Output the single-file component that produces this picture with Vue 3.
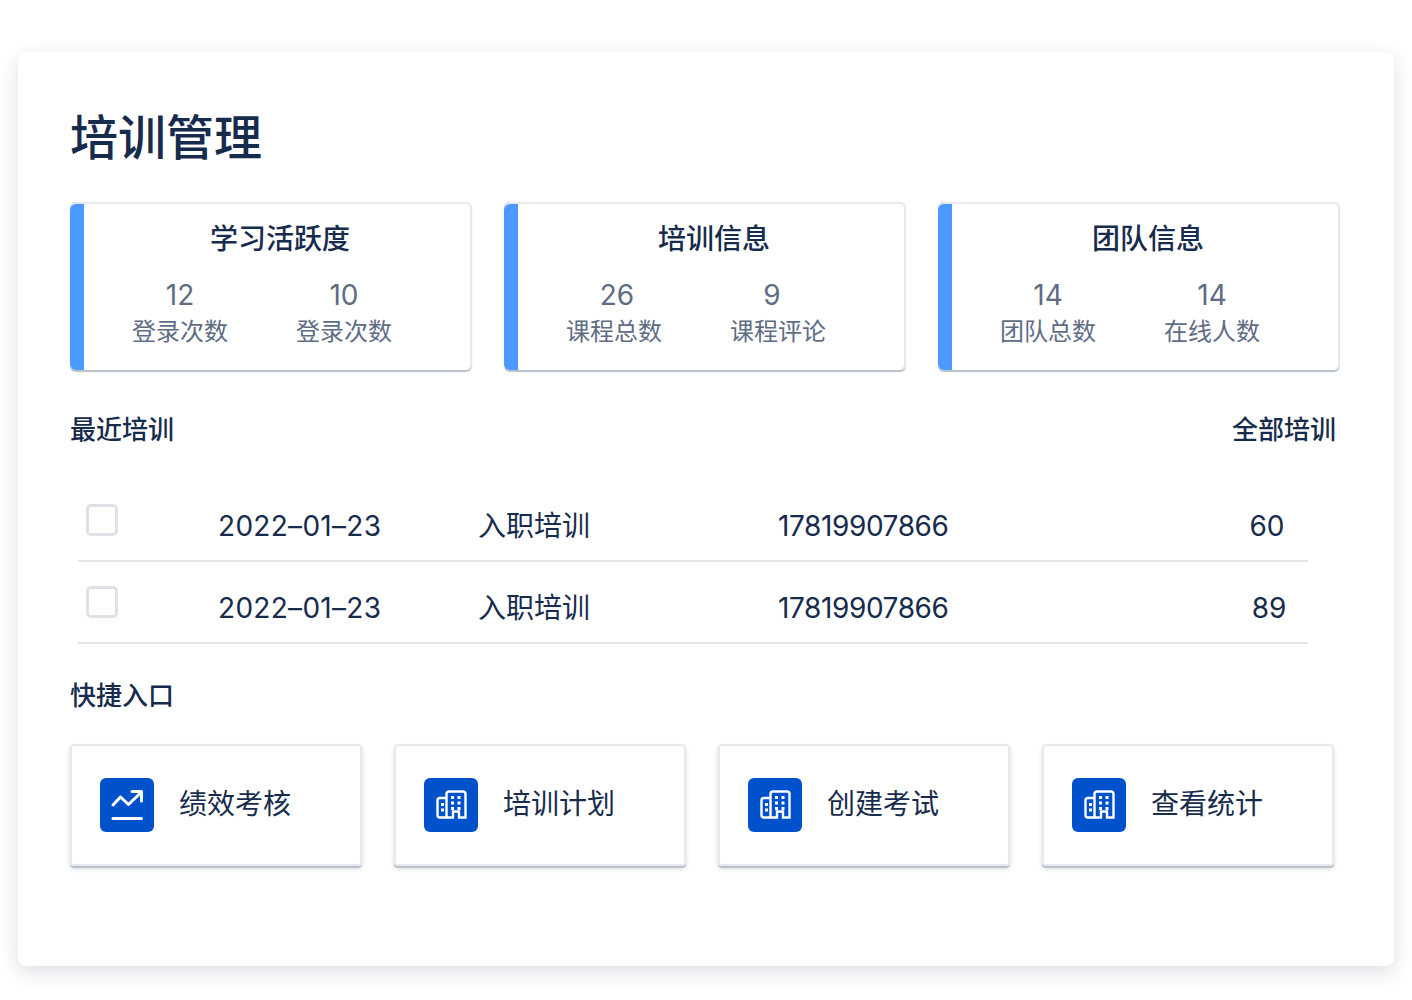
<template>
  <div class="page">
    <section class="panel">
      <h1 class="page-title">培训管理</h1>

      <div class="stat-row">
        <div v-for="card in statCards" :key="card.title" class="stat-card">
          <h2 class="stat-title">{{ card.title }}</h2>
          <div class="stat-items">
            <div v-for="item in card.items" :key="item.label" class="stat-item">
              <div class="stat-num" :style="{ transform: `translateX(${item.shift || 0}px)` }">{{ item.num }}</div>
              <div class="stat-label">{{ item.label }}</div>
            </div>
          </div>
        </div>
      </div>

      <div class="section-head">
        <span>最近培训</span>
        <span>全部培训</span>
      </div>

      <div class="table">
        <div v-for="(row, i) in rows" :key="i" class="row">
          <span class="check"></span>
          <span class="cell date">{{ row.date }}</span>
          <span class="cell">{{ row.name }}</span>
          <span class="cell phone">{{ row.phone }}</span>
          <span class="cell score" :style="{ transform: `translateX(${row.shift}px)` }">{{ row.score }}</span>
        </div>
      </div>

      <div class="section-head quick-head">
        <span>快捷入口</span>
      </div>

      <div class="tiles">
        <div v-for="tile in tiles" :key="tile.label" class="tile">
          <span class="tile-icon">
            <svg v-if="tile.icon === 'chart'" width="54" height="54" viewBox="0 0 54 54" fill="none" stroke="#fff" stroke-width="3" stroke-linecap="round" stroke-linejoin="round">
              <path d="M13 27l7.500-8 8 7.500L41.500 14" />
              <path d="M32 13.500h9.500V23" />
              <path d="M13 40.500h28.500" />
            </svg>
            <svg v-else width="54" height="54" viewBox="0 0 54 54" fill="none" stroke="#fff" stroke-width="2.400">
              <path d="M22.500 20H16a2.500 2.500 0 0 0-2.500 2.500V37a2.500 2.500 0 0 0 2.500 2.500h6.500" />
              <path d="M22.500 39.500V16a2.500 2.500 0 0 1 2.500-2.500h14a2.500 2.500 0 0 1 2.500 2.500v23.500H35v-6h-6v6z" />
              <g fill="#fff" stroke="none">
                <rect x="17" y="25" width="3" height="3" />
                <rect x="17" y="30.500" width="3" height="3" />
                <rect x="27" y="18" width="3" height="3" />
                <rect x="33.500" y="18" width="3" height="3" />
                <rect x="27" y="23.500" width="3" height="3" />
                <rect x="33.500" y="23.500" width="3" height="3" />
                <rect x="27" y="29" width="3" height="3" />
                <rect x="33.500" y="29" width="3" height="3" />
              </g>
            </svg>
          </span>
          <span class="tile-label">{{ tile.label }}</span>
        </div>
      </div>
    </section>
  </div>
</template>

<script setup>
const statCards = [
  { title: '学习活跃度', items: [{ num: 12, label: '登录次数' }, { num: 10, label: '登录次数' }] },
  { title: '培训信息', items: [{ num: 26, label: '课程总数', shift: 3 }, { num: 9, label: '课程评论', shift: -6 }] },
  { title: '团队信息', items: [{ num: 14, label: '团队总数' }, { num: 14, label: '在线人数' }] }
]

const rows = [
  { date: '2022–01–23', name: '入职培训', phone: '17819907866', score: 60, shift: 0 },
  { date: '2022–01–23', name: '入职培训', phone: '17819907866', score: 89, shift: 2 }
]

const tiles = [
  { label: '绩效考核', icon: 'chart' },
  { label: '培训计划', icon: 'building' },
  { label: '创建考试', icon: 'building' },
  { label: '查看统计', icon: 'building' }
]
</script>

<style>
html,
body {
  background: #fff;
}
</style>

<style scoped>
.page {
  height: 1000px;
  box-sizing: border-box;
  padding: 52px 18px 0;
  overflow: hidden;
  font-family: Inter, "Noto Sans CJK SC", sans-serif;
  color: #172b4d;
}

.panel {
  height: 914px;
  box-sizing: border-box;
  padding: 52px 54px 0 52px;
  background: #fff;
  border-radius: 8px;
  box-shadow: 0 6px 20px rgba(9, 30, 66, 0.14);
}

.page-title {
  margin: 0 0 30px;
  font-size: 48px;
  line-height: 68px;
  font-weight: 500;
}

.stat-row {
  display: flex;
  gap: 32px;
}

.stat-card {
  width: 402px;
  height: 168px;
  box-sizing: border-box;
  padding: 0 0 0 14px;
  border-radius: 6px;
  background: linear-gradient(to right, #4c9aff 14px, #fff 14px);
  box-shadow: inset 0 2px 0 #e8e9ef, inset -2px 0 0 #e8e9ef, 0 2px 1px #b9bfca;
}

.stat-title {
  margin: 0;
  padding: 16px 0 0 4px;
  font-size: 28px;
  line-height: 42px;
  font-weight: 500;
  text-align: center;
}

.stat-items {
  display: flex;
  padding: 16px 0 0 14px;
}

.stat-item {
  width: 164px;
  text-align: center;
  color: #5e6c84;
}

.stat-num {
  font-size: 28px;
  line-height: 38px;
}

.stat-label {
  font-size: 24px;
  line-height: 36px;
}

.section-head {
  display: flex;
  justify-content: space-between;
  margin-top: 42px;
  padding-right: 4px;
  font-size: 26px;
  line-height: 36px;
  font-weight: 500;
}

.quick-head {
  margin-top: 34px;
}

.table {
  margin: 32px 32px 0 8px;
}

.row {
  display: grid;
  grid-template-columns: 132px 260px 300px 1fr 56px;
  align-items: start;
  height: 82px;
  box-sizing: border-box;
  padding: 24px 13px 0 8px;
  border-bottom: 2px solid #e4e5eb;
}

.check {
  width: 32px;
  height: 32px;
  box-sizing: border-box;
  border: 3px solid #dfe1e6;
  border-radius: 5px;
}

.cell {
  font-size: 28px;
  line-height: 45px;
}

.date {
  letter-spacing: 0.3px;
}

.phone {
  letter-spacing: -0.4px;
}

.score {
  text-align: center;
}

.tiles {
  display: flex;
  gap: 32px;
  margin-top: 30px;
}

.tile {
  display: flex;
  align-items: center;
  width: 292px;
  height: 122px;
  box-sizing: border-box;
  padding-left: 30px;
  border-radius: 4px;
  background: #fff;
  box-shadow: inset 0 0 0 2px #e8e9ef, 0 2px 1px #b9bfca, 0 3px 5px rgba(9, 30, 66, 0.14);
}

.tile-icon {
  display: flex;
  width: 54px;
  height: 54px;
  margin-right: 25px;
  border-radius: 6px;
  background: #0052cc;
}

.tile-label {
  margin-bottom: 2px;
  font-size: 28px;
  line-height: 40px;
}
</style>
